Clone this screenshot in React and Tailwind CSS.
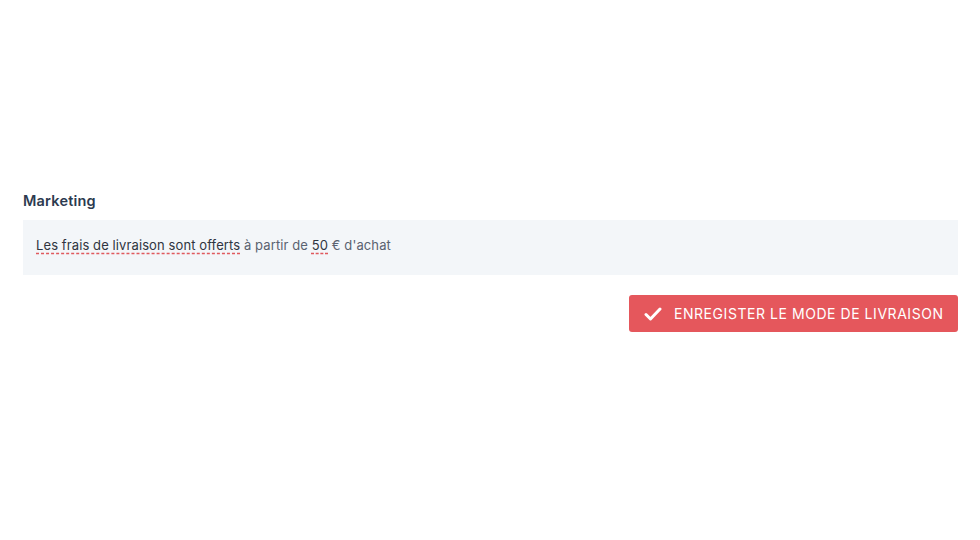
import React from "react";

const App = () => {
  return (
    <div className="w-[980px] h-[540px] bg-white px-[23px] pt-[192px]" style={{ fontFamily: "Inter, 'Open Sans', sans-serif" }}>
      <h2 className="text-[14.5px] font-semibold text-[#2c3a4f] leading-[18px] tracking-[0.2px]">Marketing</h2>
      <div className="mt-[10px] w-[935px] h-[55px] bg-[#f3f6f9] flex items-center px-[13px] pb-[4px]">
        <p className="text-[13px] text-[#5a6270] tracking-[0.1px]">
          <span className="text-[#2f3540] underline decoration-dashed decoration-[#e0595e] underline-offset-[3px]">Les frais de livraison sont offerts</span>{" "}
          à partir de{" "}
          <span className="text-[#2f3540] underline decoration-dashed decoration-[#e0595e] underline-offset-[3px]">50</span>{" "}
          € d'achat
        </p>
      </div>
      <div className="flex justify-end mt-[20px] w-[935px]">
        <button
          type="button"
          className="h-[37px] w-[329px] rounded-[3px] bg-[#e5575c] text-white flex items-center pl-[15px] gap-[12px] text-[14px] tracking-[0.55px]"
        >
          <svg width="18" height="14" viewBox="0 0 18 14" fill="none">
            <path d="M2 7.5 L6.5 12 L16 2" stroke="white" strokeWidth="3" strokeLinecap="round" strokeLinejoin="round" />
          </svg>
          ENREGISTER LE MODE DE LIVRAISON
        </button>
      </div>
    </div>
  );
};

export default App;
